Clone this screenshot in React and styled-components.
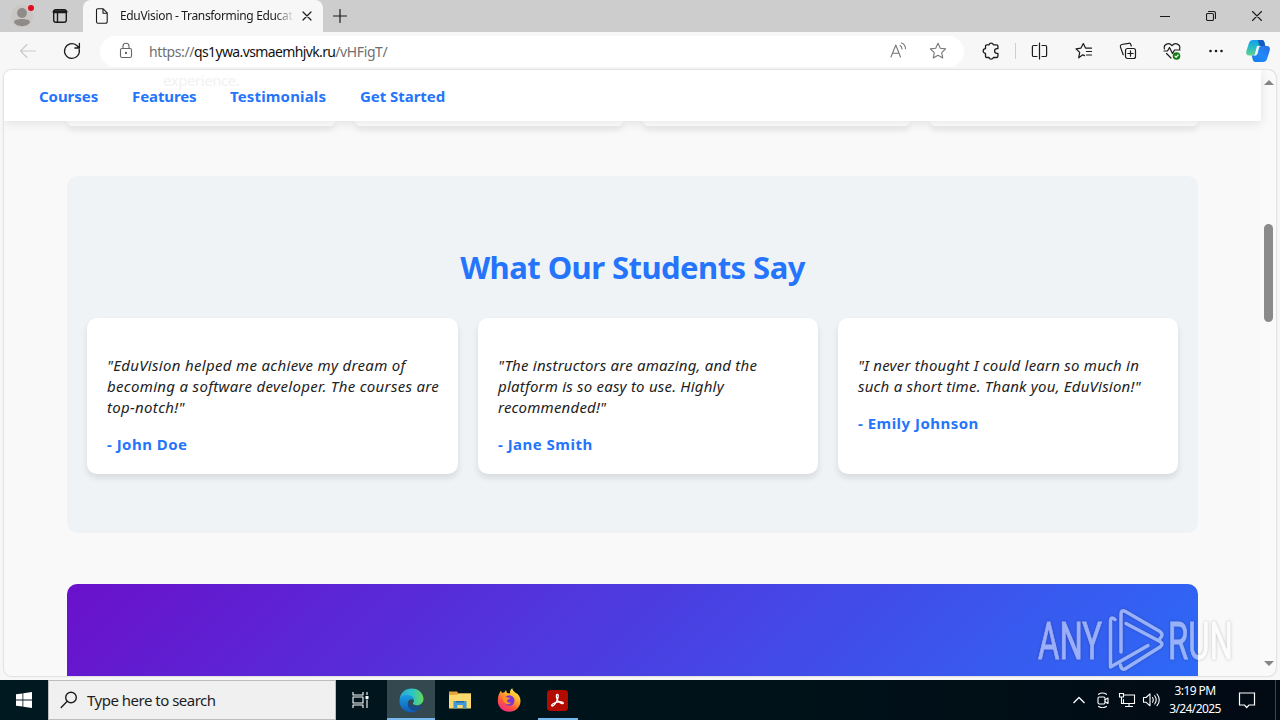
import { useState } from "react";
import styled, { createGlobalStyle, css } from "styled-components";

const LINKS = [
  { label: "Courses", width: 59, spacing: -0.05 },
  { label: "Features", width: 64, spacing: -0.1 },
  { label: "Testimonials", width: 96, spacing: 0.15 },
  { label: "Get Started", width: 85, spacing: -0.05 },
];

const TESTIMONIALS = [
  {
    lines: [
      '"EduVision helped me achieve my dream of',
      "becoming a software developer. The courses are",
      'top-notch!"',
    ],
    author: "- John Doe",
    width: 371,
    spacing: 0.32,
  },
  {
    lines: [
      '"The instructors are amazing, and the',
      "platform is so easy to use. Highly",
      'recommended!"',
    ],
    author: "- Jane Smith",
    width: 340,
    spacing: 0.21,
  },
  {
    lines: [
      '"I never thought I could learn so much in',
      'such a short time. Thank you, EduVision!"',
    ],
    author: "- Emily Johnson",
    width: 340,
    spacing: 0.22,
  },
];

const Icon = ({ size = 20, children, ...rest }) => (
  <svg
    width={size}
    height={size}
    viewBox={`0 0 ${size} ${size}`}
    fill="none"
    stroke="currentColor"
    strokeWidth="1.1"
    strokeLinecap="round"
    strokeLinejoin="round"
    {...rest}
  >
    {children}
  </svg>
);

const STAR =
  "M10 2.3l2.3 4.9 5.3.7-3.9 3.7 1 5.3-4.7-2.6-4.7 2.6 1-5.3L2.4 7.9l5.3-.7z";

const TitleBar = () => (
  <Titles>
    <Profile>
      <Icon size={24} stroke="none">
        <circle cx="12" cy="12" r="11" fill="#c9c6c4" />
        <circle cx="12" cy="9" r="4.900" fill="#8f8b89" />
        <path d="M4 18.600c0-2.800 3.400-3.600 8-3.600s8 .800 8 3.600c-1.500 2.300-4.400 3.600-8 3.600s-6.500-1.300-8-3.600z" fill="#8f8b89" />
        <circle cx="21" cy="4" r="3" fill="#e00b1c" />
      </Icon>
    </Profile>
    <Workspaces>
      <Icon size={16} strokeWidth="1.400">
        <rect x="1.700" y="1.700" width="12.600" height="12.600" rx="2.200" />
        <path d="M2 3.800h12" strokeWidth="3" />
        <path d="M5.500 5v9" />
      </Icon>
    </Workspaces>
    <Tab>
      <Icon size={16}>
        <path d="M3.700.800h5.500l4 4v8.900a1.500 1.500 0 0 1-1.500 1.500H4a1.500 1.500 0 0 1-1.500-1.500V2A1.200 1.200 0 0 1 3.700.800zM9 1v4.200h4" />
      </Icon>
      <TabTitle>EduVision - Transforming Educati</TabTitle>
      <Icon size={10} strokeWidth="1.200">
        <path d="M1 1l8 8M9 1L1 9" />
      </Icon>
    </Tab>
    <NewTab>
      <Icon size={14} strokeWidth="1.200">
        <path d="M7 .500v13M.500 7h13" />
      </Icon>
    </NewTab>
    <WindowButtons>
      <Icon size={10}>
        <path d="M0 5.500h10" />
      </Icon>
      <Icon size={10}>
        <rect x=".500" y="2.500" width="7" height="7" rx="1.300" />
        <path d="M2.500.500h5a2 2 0 0 1 2 2v5" />
      </Icon>
      <Icon size={10}>
        <path d="M.500.500l9 9M9.500.500l-9 9" />
      </Icon>
    </WindowButtons>
  </Titles>
);

const Toolbar = () => (
  <Tools>
    <ToolButton $width={56} $color="#c9c9c9">
      <Icon>
        <path d="M17.500 10h-15M9 3.500L2.500 10 9 16.500" />
      </Icon>
    </ToolButton>
    <ToolButton $width={32}>
      <Icon strokeWidth="1.300">
        <path d="M17.200 8.500A7.400 7.400 0 1 1 14.500 4.200L17.300 7M17.400 2.500V7h-4.500" />
      </Icon>
    </ToolButton>
    <AddressBar>
      <ToolButton $width={20} $color="#666">
        <Icon>
          <rect x="4.500" y="7.500" width="11" height="9" rx="1.600" />
          <path d="M7 7.500V5.300a3 3 0 0 1 6 0v2.200" />
          <circle cx="10" cy="12" r=".6" fill="currentColor" />
        </Icon>
      </ToolButton>
      <Url>
        https://<b>qs1ywa.vsmaemhjvk.ru</b>/vHFigT/
      </Url>
      <ToolButton $width={40} $color="#777">
        <Icon>
          <path d="M3 16L7.800 4 12.500 16M4.700 12.300h6.300M12 4.500q2 1 2 3.500M13.500 2q4 1.600 4 5.700" />
        </Icon>
      </ToolButton>
      <ToolButton $width={40} $color="#777">
        <Icon>
          <path d={STAR} />
        </Icon>
      </ToolButton>
    </AddressBar>
    <ToolButton $width={46}>
      <Icon strokeWidth="1.300">
        <path d="M5.800 3.800h2.200a2.300 2.300 0 0 1 4.400 0h3.200a1.300 1.300 0 0 1 1.300 1.300v2.600h-1a2.300 2.300 0 0 0 0 4.600h1v2.900a1.300 1.300 0 0 1-1.300 1.300h-3.200a2.300 2.300 0 0 1-4.400 0H5.800A1.300 1.300 0 0 1 4.500 15.200v-2.900a2.300 2.300 0 0 1 0-4.600V5.100a1.300 1.300 0 0 1 1.300-1.300z" />
      </Icon>
    </ToolButton>
    <Separator />
    <ToolButton $width={44}>
      <Icon strokeWidth="1.200">
        <path d="M9.500 2v16M7 4.500H3.700A1.300 1.300 0 0 0 2.400 5.800v8.400a1.300 1.300 0 0 0 1.300 1.300H7M12 4.500h3.300a1.300 1.300 0 0 1 1.300 1.300v8.400a1.300 1.300 0 0 1-1.300 1.300H12" />
      </Icon>
    </ToolButton>
    <ToolButton $width={44}>
      <Icon strokeWidth="1.200">
        <path d="M10.500 14.600L8.800 13.700 4.700 16.800l1-5.400L2 7.800l5-.7L9.300 2.600l2.200 4.500H17.500M12.500 10.500h5M12.500 14h5" />
      </Icon>
    </ToolButton>
    <ToolButton $width={44}>
      <Icon strokeWidth="1.200">
        <rect x="7.500" y="7.500" width="10" height="10" rx="2" />
        <path d="M12.500 9.800v5.400M9.800 12.500h5.400M5.200 13.800L2.400 5.900a2 2 0 0 1 1.300-2.400l6.800-1.200a2 2 0 0 1 2.400 1.400l.4 1.300" />
      </Icon>
    </ToolButton>
    <ToolButton $width={44}>
      <Icon strokeWidth="1.200">
        <path d="M2.400 8C1.200 3 7 1 10 4.700 13 1 19 3 17.600 8M2 10h3.500l2-3.500 3 6 2-3.500h5.500M4.500 12.500L9 17" />
        <circle cx="14.500" cy="15" r="3.800" fill="#107c10" stroke="none" />
        <path d="M13 15.200l1.100 1.100 2-2.300" stroke="#fff" />
      </Icon>
    </ToolButton>
    <ToolButton $width={44}>
      <Icon stroke="none" fill="currentColor">
        <circle cx="4.500" cy="10" r="1.300" />
        <circle cx="10" cy="10" r="1.300" />
        <circle cx="15.500" cy="10" r="1.300" />
      </Icon>
    </ToolButton>
    <ToolButton $width={40}>
      <CopilotLogo />
    </ToolButton>
  </Tools>
);

const CopilotLogo = () => (
  <svg width="24" height="24" viewBox="0 0 24 24">
    <defs>
      <linearGradient id="cpLeft" x1="0" y1="0" x2="0" y2="1">
        <stop offset="0" stopColor="#0fa0ee" />
        <stop offset=".5" stopColor="#2bbcc5" />
        <stop offset="1" stopColor="#5fd48b" />
      </linearGradient>
      <linearGradient id="cpRight" x1="1" y1="0" x2="0" y2="1">
        <stop offset="0" stopColor="#2a6be0" />
        <stop offset=".5" stopColor="#2489fb" />
        <stop offset="1" stopColor="#1479e8" />
      </linearGradient>
    </defs>
    <path d="M7 1h9c1.500 0 2 1 2.500 2.700l.8 3.300h-3L8 16.500H3C0 16.500-.2 14 .6 11.300L3 4C3.700 2 4.800 1 7 1z" fill="url(#cpLeft)" />
    <path d="M12 1h4c1.500 0 2 1 2.500 2.700l.8 3.300H15c-1.200 0-2-.7-2.300-2z" fill="#145cc0" />
    <path d="M17 23H9.500C7.500 23 7 21.500 6.500 19.500L5.800 16.500h3c1.500 0 2.100-.7 2.500-2L13 9c.4-1.500 1.300-2 2.500-2H21c3 0 3.300 2.500 2.500 5.200L21 20c-.6 2-1.800 3-4 3z" fill="url(#cpRight)" />
    <path d="M11 7h4.200c-1.200 0-1.900.8-2.300 2.200l-1.500 5.100c-.4 1.500-1 2.200-2.500 2.200H8.500z" fill="#f3faff" />
  </svg>
);

const Watermark = () => (
  <Mark width="206" height="70" viewBox="0 0 206 70">
    <g
      fill="#fff"
      stroke="#fff"
      strokeWidth=".9"
      fontFamily="Roboto, sans-serif"
      fontSize="52"
    >
      <text x="5" y="53" textLength="64" lengthAdjust="spacingAndGlyphs">
        ANY
      </text>
      <text x="135" y="53" textLength="65" lengthAdjust="spacingAndGlyphs">
        RUN
      </text>
    </g>
    <g fill="none" stroke="#fff" strokeWidth="3.500" strokeLinejoin="round" strokeLinecap="round">
      <path d="M82 13.500q-4.500-4-4.500 2V61L115 39.500" />
      <path d="M88 46V8.500q0-5.500 4.500-3L127 25.500q4 3.500 0 7" />
      <path d="M87.500 59q1 6.500 6 3L127 41q4-3 0-5.500L93 17.500" />
    </g>
  </Mark>
);

const Taskbar = () => (
  <Task>
    <TaskButton $width={48}>
      <Icon size={16} stroke="none" fill="#fff">
        <path d="M0 2.300L6.500 1.400v6.200H0zM7.300 1.300L16 0v7.600H7.300zM0 8.400h6.500v6.200L0 13.700zM7.300 8.400H16V16l-8.700-1.300z" />
      </Icon>
    </TaskButton>
    <Search>
      <Icon size={18} strokeWidth="1.400">
        <circle cx="11" cy="6.500" r="5.300" />
        <path d="M7.200 10.300L1.200 16.500" />
      </Icon>
      <SearchText>Type here to search</SearchText>
    </Search>
    <TaskButton $width={51}>
      <Icon size={20} stroke="#fff" strokeLinecap="butt">
        <path d="M1 2v3h10V2M1 18v-3h10v3M1 7h10v6H1zM15 2v3M15 9.500v8.500" />
        <path d="M13.500 6h3v3h-3z" fill="#fff" stroke="none" />
      </Icon>
    </TaskButton>
    <TaskButton $width={48} $active>
      <svg width="25" height="25" viewBox="0 0 25 25">
        <defs>
          <linearGradient id="edgeTop" x1="0" y1=".5" x2="1" y2=".5">
            <stop offset="0" stopColor="#2aa5dc" />
            <stop offset=".5" stopColor="#2bc3c9" />
            <stop offset="1" stopColor="#63db58" />
          </linearGradient>
          <linearGradient id="edgeBody" x1="0" y1="0" x2="0" y2="1">
            <stop offset="0" stopColor="#1b9de2" />
            <stop offset="1" stopColor="#0d5bb4" />
          </linearGradient>
        </defs>
        <path d="M.700 11C1.500 4.500 6.500.500 12.700.500c7 0 11.800 5 11.800 10.300 0 4-3 6.500-6.600 6.500-3 0-4-1-4-1.700 0-.8 1-1.300 1-3.100 0-2.500-2.500-4.500-6-4.500-4 0-7 1.300-8.200 3z" fill="url(#edgeTop)" />
        <path d="M.500 12.500C.800 9 4.300 7 8.500 7c3.800 0 6.400 2.400 6.400 5.300-2-2-6-1.300-6 3 0 4.500 4 9 9.800 6.500C16.500 24 14.300 24.500 12.500 24.500 5.500 24.500 0 19 .500 12.500z" fill="url(#edgeBody)" />
        <path d="M9 14.500c-1.300 5.500 4 10 9.800 7.300 1.800-.8 3.300-2.300 4.200-3.800.3-.6-.2-.8-.7-.6-6 2.500-12.300.3-13.300-2.900z" fill="#174b91" />
      </svg>
    </TaskButton>
    <TaskButton $width={49}>
      <svg width="22" height="20" viewBox="0 0 22 20">
        <path d="M0 1.500h8l1.500 2H22V7H0z" fill="#e8a33a" />
        <path d="M0 5l8.500-.200L10 3.500h12v15H0z" fill="#fbd96c" />
        <path d="M4.500 18.500V11h13v7.500h-3.800V15H8.300v3.500z" fill="#3f9bd8" />
        <path d="M7 11h8v1.500H7z" fill="#236ea8" />
      </svg>
    </TaskButton>
    <TaskButton $width={49}>
      <svg width="24" height="24" viewBox="0 0 24 24">
        <defs>
          <linearGradient id="fox" x1=".8" y1="0" x2=".2" y2="1">
            <stop offset="0" stopColor="#fff04d" />
            <stop offset=".35" stopColor="#ffb12b" />
            <stop offset=".65" stopColor="#ff5a38" />
            <stop offset="1" stopColor="#f0218c" />
          </linearGradient>
        </defs>
        <path d="M2.500 5L4 2.500 5 5l2.500-.8L9 2l1 3 3 .5c-.3-2.500.7-4.300 2.300-5.300 0 2 1.700 3 3.200 4.500C21.500 6 23.500 9 23.500 13c0 6-5 10.800-11.300 10.800S.800 19 .800 13c0-3 .5-5.600 1.700-8z" fill="url(#fox)" />
        <circle cx="12.300" cy="12.500" r="5.200" fill="#7a35d8" />
        <path d="M5 9.500c2-1.500 4-1 5.500.2h3c-.3 1.500-3.500 1.600-3.500 3 0 1.500 2 2.500 4.300 1.800-1.500 2.500-5.300 2.500-7.300-.5z" fill="#ff9226" />
      </svg>
    </TaskButton>
    <Running>
      <svg width="21" height="21" viewBox="0 0 21 21">
        <rect width="21" height="21" rx="3.500" fill="#b30b00" />
        <path d="M10.300 4.500c1.700 0 .9 3.500-.6 6.500-1.300 2.700-3.300 5.200-4.600 5-1.500-.3.400-2.800 4-3.700 3.700-1 7.400-.6 7.200.9-.3 1.200-3.200.1-4.900-1.800-2-2.200-2.800-6.900-1.100-6.900z" fill="none" stroke="#fff" strokeWidth="1.300" />
      </svg>
    </Running>
    <Tray>
      <Icon size={12} strokeLinecap="butt" strokeWidth="1.300">
        <path d="M.500 9L6 3.500 11.500 9" />
      </Icon>
      <Icon size={16}>
        <rect x="3" y="5" width="7" height="7" rx="1.200" />
        <path d="M10 7.800l3-1.800v5.500l-3-1.800M3.500 2.300q4-2.600 8 0M3.500 14.500q4 2.400 8 0" />
      </Icon>
      <Icon size={18} strokeLinejoin="miter">
        <path d="M6.500 4h10v8.500H5.500v-4M11 12.500V15M7.500 15.500h7M1.500 2.500h4V6h-4zM3.500 6v6.500h2.500" />
      </Icon>
      <Icon size={18}>
        <path d="M1.500 6.500h2.500l4-3.700v12L4 11.200H1.500zM10.500 6.500q1.500 2.500 0 4.700M12.700 4.700q3 4.200 0 8.300M15 3q4.500 6 0 11.700" />
      </Icon>
    </Tray>
    <Clock>
      <span>3:19 PM</span>
      <span>3/24/2025</span>
    </Clock>
    <TaskButton $width={48}>
      <Icon size={18} stroke="#fff" strokeLinejoin="miter" strokeWidth="1.200">
        <path d="M1.500 2h15v12H11l-2.300 2.500L6.500 14h-5z" />
      </Icon>
    </TaskButton>
    <ShowDesktop />
  </Task>
);

const App = () => {
  const [current, setCurrent] = useState(null);

  return (
    <Desktop>
      <GlobalStyle />
      <TitleBar />
      <Toolbar />
      <Viewport>
        <Page>
          <Nav>
            {LINKS.map(({ label, width, spacing }) => (
              <NavLink
                key={label}
                $width={width}
                $spacing={spacing}
                aria-current={current === label}
                onClick={() => setCurrent(label)}
              >
                {label}
              </NavLink>
            ))}
            <Ghost>experience.</Ghost>
          </Nav>
          <Content>
            <FeatureRow>
              <Feature />
              <Feature />
              <Feature />
              <Feature />
            </FeatureRow>
            <Students>
              <Heading>What Our Students Say</Heading>
              <Cards>
                {TESTIMONIALS.map(({ lines, author, width, spacing }) => (
                  <Card key={author} $width={width}>
                    <Quote $spacing={spacing}>
                      {lines.map((line) => (
                        <span key={line}>{line}</span>
                      ))}
                    </Quote>
                    <Author>{author}</Author>
                  </Card>
                ))}
              </Cards>
            </Students>
            <Banner />
          </Content>
        </Page>
        <Scrollbar>
          <Arrow />
          <Thumb />
          <Arrow $down />
        </Scrollbar>
        <Watermark />
      </Viewport>
      <Taskbar />
    </Desktop>
  );
};

const GlobalStyle = createGlobalStyle`
  * {
    box-sizing: border-box;
  }
  body {
    margin: 0;
    overflow: hidden;
    font-family: "Noto Sans", "Open Sans", sans-serif;
  }
  svg {
    display: block;
    flex: none;
  }
`;

const Desktop = styled.div`
  display: flex;
  flex-direction: column;
  width: 1280px;
  height: 720px;
  overflow: hidden;
  background: #f7f7f7;
  color: #1b1b1b;
`;

const Titles = styled.header`
  display: flex;
  align-items: center;
  height: 32px;
  flex: none;
  background: #cdcdcd;
`;

const Profile = styled.div`
  padding: 0 0 0 10px;
`;

const Workspaces = styled.div`
  padding: 0 15px 0 18px;
`;

const Tab = styled.div`
  display: flex;
  align-items: center;
  width: 240px;
  height: 32px;
  padding: 0 11px 0 11px;
  border-radius: 8px 8px 0 0;
  background: #f7f7f7;
`;

const TabTitle = styled.div`
  width: 174px;
  margin: 0 9px 0 10px;
  overflow: hidden;
  font-size: 12px;
  letter-spacing: -0.34px;
  line-height: 16px;
  white-space: nowrap;
  mask-image: linear-gradient(to right, #000 155px, transparent 174px);
`;

const NewTab = styled.div`
  padding: 0 0 0 10px;
`;

const WindowButtons = styled.div`
  display: flex;
  gap: 36px;
  margin-left: auto;
  padding-right: 18px;
`;

const Tools = styled.div`
  display: flex;
  align-items: center;
  height: 38px;
  flex: none;
`;

const ToolButton = styled.div`
  display: flex;
  align-items: center;
  justify-content: center;
  width: ${({ $width }) => $width}px;
  flex: none;
  color: ${({ $color }) => $color || "#1b1b1b"};
`;

const AddressBar = styled.div`
  display: flex;
  align-items: center;
  width: 864px;
  height: 31px;
  margin: 0 4px 0 12px;
  padding: 0 6px 0 16px;
  border-radius: 16px;
  background: #fff;
`;

const Url = styled.div`
  flex: 1;
  margin-left: 13px;
  color: #707070;
  font-size: 14px;
  letter-spacing: -0.4px;

  b {
    color: #111;
    font-weight: 400;
    letter-spacing: -0.63px;
  }
`;

const Separator = styled.div`
  width: 1px;
  height: 16px;
  margin: 0 2px 0 1px;
  background: #cfcfcf;
`;

const Viewport = styled.main`
  position: relative;
  display: flex;
  width: 1272px;
  height: 606px;
  margin: 0 4px 4px;
  flex: none;
  border-radius: 8px;
  overflow: hidden;
  background: #fafafa;
  box-shadow: 0 0 2px rgba(0, 0, 0, 0.3);
`;

const Page = styled.div`
  width: 1257px;
  background: #f9f9f9;
`;

const Nav = styled.nav`
  position: relative;
  display: flex;
  align-items: center;
  gap: 34px;
  height: 51px;
  padding: 1px 0 0 35px;
  background: #fff;
  box-shadow: 0 2px 10px rgba(0, 0, 0, 0.1);
`;

const NavLink = styled.a`
  width: ${({ $width }) => $width}px;
  color: #2575fc;
  font-size: 15px;
  font-weight: 700;
  letter-spacing: ${({ $spacing }) => $spacing}px;
  line-height: 17px;
  white-space: nowrap;
  cursor: pointer;
`;

/* scrolled copy showing through the translucent nav */
const Ghost = styled.span`
  position: absolute;
  top: 2px;
  left: 159px;
  color: #f2f2f2;
  font-size: 15px;
  letter-spacing: -0.45px;
  line-height: 16px;
`;

const Content = styled.div`
  width: 1131px;
  margin-left: 63px;
`;

const FeatureRow = styled.div`
  display: flex;
  gap: 20px;
  height: 5px;
`;

const Feature = styled.div`
  flex: 1;
  border-radius: 0 0 10px 10px;
  background: #fff;
  box-shadow: 0 4px 6px rgba(0, 0, 0, 0.1);
`;

const Students = styled.section`
  height: 357px;
  margin-top: 50px;
  padding: 70px 20px 0;
  border-radius: 10px;
  background: #f0f3f6;
`;

const Heading = styled.h2`
  height: 43px;
  margin: 0 0 29px;
  color: #2575fc;
  font-size: 31px;
  letter-spacing: -0.55px;
  line-height: 43px;
  text-align: center;
  white-space: nowrap;
`;

const Cards = styled.div`
  display: flex;
  gap: 20px;
`;

const Card = styled.article`
  width: ${({ $width }) => $width}px;
  height: 156px;
  padding: 37px 20px 0;
  border-radius: 10px;
  background: #fff;
  box-shadow: 0 4px 6px rgba(0, 0, 0, 0.1);
`;

const Quote = styled.p`
  display: flex;
  flex-direction: column;
  margin: 0 0 16px;
  color: #222;
  font-size: 15px;
  font-style: italic;
  letter-spacing: ${({ $spacing }) => $spacing}px;
  line-height: 21px;
  white-space: nowrap;
`;

const Author = styled.h4`
  margin: 0;
  color: #2575fc;
  font-size: 15px;
  letter-spacing: 0.48px;
  line-height: 21px;
`;

const Banner = styled.section`
  height: 250px;
  margin-top: 51px;
  border-radius: 10px;
  background: linear-gradient(135deg, #6a11cb, #2575fc);
`;

const Scrollbar = styled.div`
  display: flex;
  flex-direction: column;
  align-items: center;
  width: 15px;
  padding: 10px 0 10px;
`;

const Arrow = styled.div`
  border: 5px solid transparent;
  ${({ $down }) =>
    $down
      ? css`
          margin-top: auto;
          border-top-color: #858585;
          border-bottom-width: 0;
        `
      : css`
          border-bottom-color: #858585;
          border-top-width: 0;
        `}
`;

const Thumb = styled.div`
  width: 9px;
  height: 98px;
  margin-top: 139px;
  border-radius: 5px;
  background: #8b8b8b;
`;

const Mark = styled.svg`
  position: absolute;
  right: 37px;
  bottom: 0;
  opacity: 0.5;
  filter: drop-shadow(0 0 1.5px rgba(0, 0, 0, 0.45));
`;

const Task = styled.footer`
  display: flex;
  align-items: center;
  height: 40px;
  flex: none;
  background: linear-gradient(to right, #001820, #001219 60%, #020a14);
  color: #fff;
`;

const TaskButton = styled.div`
  display: flex;
  align-items: center;
  justify-content: center;
  width: ${({ $width }) => $width}px;
  height: 40px;
  flex: none;
  background: ${({ $active }) => ($active ? "#34484f" : "none")};
  box-shadow: ${({ $active }) => ($active ? "inset 0 -2px #76b9ed" : "none")};
`;

const Running = styled.div`
  display: flex;
  align-items: center;
  justify-content: center;
  width: 40px;
  height: 40px;
  margin-left: 5px;
  padding-right: 1px;
  box-shadow: inset 0 -2px #76b9ed;
`;

const Search = styled.div`
  display: flex;
  align-items: center;
  gap: 9px;
  width: 288px;
  height: 40px;
  padding-left: 11px;
  border: 1px solid #bdbdbd;
  background: #f0f0f0;
  color: #1d1d1d;
`;

const SearchText = styled.span`
  font-size: 15px;
  letter-spacing: -0.5px;
`;

const Tray = styled.div`
  display: grid;
  grid-template-columns: repeat(4, 24px);
  align-items: center;
  justify-items: center;
  margin: 0 5px 0 auto;
`;

const Clock = styled.div`
  display: flex;
  flex-direction: column;
  align-items: center;
  width: 54px;
  margin-right: 1px;
  font-size: 12px;
  letter-spacing: -0.6px;
  line-height: 18px;
`;

const ShowDesktop = styled.div`
  width: 5px;
  height: 40px;
  margin-left: 4px;
  border-left: 1px solid #3d4550;
`;

export default App;
